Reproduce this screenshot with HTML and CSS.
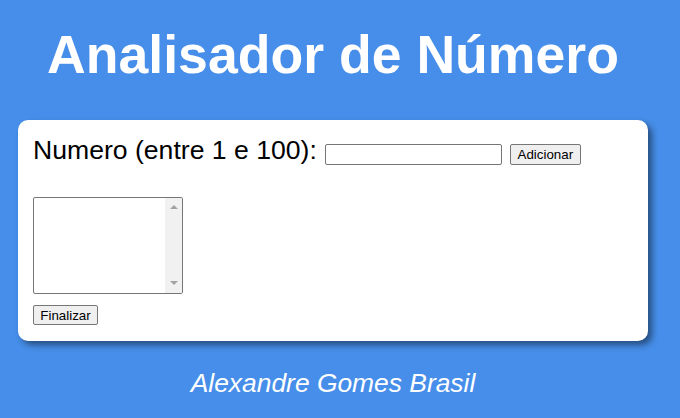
FILE: index.html
```html
<!DOCTYPE html>
<html lang="pt-BR">
<head>
<meta charset="utf-8">
<title>Analisador de Número</title>
<link rel="stylesheet" href="styles.css">
</head>
<body>
<header class="top">
  <h1 class="title">Analisador de Número</h1>
</header>
<section class="card">
  <div class="row">
    <label class="label" for="num">Numero (entre 1 e 100):</label>
    <input class="field" type="text" id="num">
    <button class="btn btn-add" type="button">Adicionar</button>
  </div>
  <div class="listbox">
    <div class="list-area"></div>
    <div class="scrollbar">
      <span class="arrow arrow-up"></span>
      <span class="arrow arrow-down"></span>
    </div>
  </div>
  <button class="btn btn-end" type="button">Finalizar</button>
</section>
<footer class="foot">
  <p class="author">Alexandre Gomes Brasil</p>
</footer>
</body>
</html>
```

FILE: styles.css
```css
html {
  background: #468ee9;
}
body {
  margin: 8px;
  width: 650px;
  background: #468ee9;
  font-family: "Liberation Sans", Arial, sans-serif;
}
.title {
  margin: 16px 0 35px;
  font-size: 53.6px;
  line-height: 61px;
  font-weight: bold;
  color: #ffffff;
  text-align: center;
}
.card {
  margin: 0 10px;
  padding: 15px 15px 16px;
  background: #ffffff;
  border-radius: 10px;
  box-shadow: 4px 4px 6px rgba(0, 0, 0, 0.45);
  display: flex;
  flex-direction: column;
  align-items: flex-start;
}
.row {
  display: flex;
  align-items: baseline;
  gap: 8px;
}
.label {
  font-size: 26.6px;
  line-height: 30px;
  color: #000;
}
.field {
  box-sizing: border-box;
  width: 177px;
  height: 21px;
  margin: 0;
  padding: 1px 2px;
  border: 1px solid #767676;
  border-radius: 2px;
  font-family: "Liberation Sans", Arial, sans-serif;
  font-size: 13.33px;
  background: #fff;
}
.btn {
  box-sizing: border-box;
  height: 21px;
  margin: 0;
  padding: 1px 6px;
  border: 1px solid #767676;
  border-radius: 2px;
  background: #efefef;
  color: #000;
  font-family: "Liberation Sans", Arial, sans-serif;
  font-size: 13.33px;
  line-height: 15px;
}
.btn-add {
  width: 71px;
}
.listbox {
  box-sizing: border-box;
  margin-top: 32px;
  width: 150px;
  height: 97px;
  border: 1px solid #767676;
  border-radius: 2px;
  display: flex;
  overflow: hidden;
  background: #fff;
}
.list-area {
  flex: 1;
}
.scrollbar {
  width: 17px;
  background: #f1f1f1;
  display: flex;
  flex-direction: column;
  justify-content: space-between;
  align-items: center;
  padding: 7px 0 8px;
  box-sizing: border-box;
}
.arrow {
  width: 0;
  height: 0;
  border-left: 4px solid transparent;
  border-right: 4px solid transparent;
}
.arrow-up {
  border-bottom: 4px solid #a3a3a3;
}
.arrow-down {
  border-top: 4px solid #a3a3a3;
}
.btn-end {
  margin-top: 11px;
  width: 65px;
  height: 20px;
}
.author {
  margin: 27px 0 0;
  font-size: 26.4px;
  line-height: 30px;
  font-style: italic;
  color: #ffffff;
  text-align: center;
}
```
